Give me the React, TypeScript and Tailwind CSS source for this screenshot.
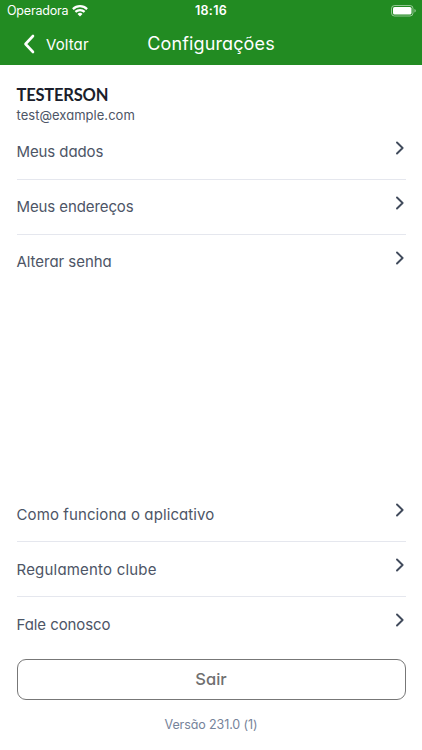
import clsx from "clsx";

type MenuItem = {
  label: string;
  tracking: string;
};

const ACCOUNT_ITEMS: MenuItem[] = [
  { label: "Meus dados", tracking: "tracking-[-0.1px]" },
  { label: "Meus endereços", tracking: "tracking-[-0.1px]" },
  { label: "Alterar senha", tracking: "tracking-[-0.04px]" },
];

const ABOUT_ITEMS: MenuItem[] = [
  { label: "Como funciona o aplicativo", tracking: "tracking-[0.1px]" },
  { label: "Regulamento clube", tracking: "tracking-[0.2px]" },
  { label: "Fale conosco", tracking: "tracking-[-0.08px]" },
];

function WifiIcon() {
  return (
    <svg className="ml-1 h-[11.5px] w-4" viewBox="0 0 16 11.5" fill="none" stroke="currentColor" strokeWidth="2.2">
      <path d="M.9 4.100a10.200 10.200 0 0 1 14.200 0" />
      <path d="M3.400 6.900a6.700 6.700 0 0 1 9.200 0" />
      <path d="M8 11.500 5.500 8.900a3.600 3.600 0 0 1 5 0z" fill="currentColor" stroke="none" />
    </svg>
  );
}

function BatteryIcon() {
  return (
    <svg className="h-3 w-[25px]" viewBox="0 0 25 12" fill="none">
      <rect x="0.5" y="0.5" width="21.5" height="10.5" rx="3" stroke="#fff" strokeOpacity="0.5" />
      <rect x="2" y="2" width="18.5" height="7.5" rx="1.6" fill="#fff" />
      <path d="M23.5 4v3.600c.8-.3 1.200-1 1.200-1.800S24.300 4.300 23.500 4z" fill="#fff" fillOpacity="0.6" />
    </svg>
  );
}

function StatusBar() {
  return (
    <div className="grid h-[22px] grid-cols-[1fr_auto_1fr] items-center px-[6px]">
      <div className="flex items-center pl-px">
        <span className="w-[61px] text-[12.5px] leading-none tracking-[-0.2px]">Operadora</span>
        <WifiIcon />
      </div>
      <span className="pt-px text-center text-[12.5px] leading-none font-semibold tracking-[0.3px]">18:16</span>
      <div className="flex justify-end">
        <BatteryIcon />
      </div>
    </div>
  );
}

function NavBar() {
  return (
    <div className="grid h-[43px] grid-cols-[1fr_auto_1fr] items-center [font-feature-settings:'cv11']">
      <button type="button" className="flex items-center pl-[23px]">
        <svg className="h-5 w-3" viewBox="0 0 12 20" fill="none" stroke="currentColor" strokeWidth="2.6">
          <path d="M10 2 2.500 10 10 18" strokeLinecap="round" strokeLinejoin="round" />
        </svg>
        <span className="ml-[11px] pt-[2px] text-[15px] leading-none tracking-[0.1px]">Voltar</span>
      </button>
      <h1 className="text-[18px] leading-none tracking-[0.14px]">Configurações</h1>
      <span />
    </div>
  );
}

function MenuList({ items, labelClass }: { items: MenuItem[]; labelClass: string }) {
  return (
    <ul>
      {items.map((item, i) => (
        <li
          key={item.label}
          className={clsx(
            "flex h-[55px] justify-between border-b",
            i < items.length - 1 ? "border-[#e5e7ee]" : "border-transparent",
          )}
        >
          <span className={clsx("text-[15px] leading-5 text-[#4d5566]", labelClass, item.tracking)}>
            {item.label}
          </span>
          <svg className="mt-[16px] mr-[2px] h-[14px] w-2" viewBox="0 0 8 14" fill="none" stroke="#414b5c" strokeWidth="1.9">
            <path d="M1 1.500 6.600 7 1 12.500" strokeLinecap="round" strokeLinejoin="round" />
          </svg>
        </li>
      ))}
    </ul>
  );
}

export default function App() {
  return (
    <div className="flex h-[750px] w-[422px] flex-col bg-white font-['Inter','Liberation_Sans',sans-serif]">
      <header className="h-[65px] shrink-0 bg-[#228b22] text-white">
        <StatusBar />
        <NavBar />
      </header>

      <main className="flex flex-1 flex-col px-[16.5px] pt-5 [font-feature-settings:'cv11']">
        <h2 className="font-['Lato',sans-serif] text-[16.5px] leading-5 font-bold tracking-[-0.2px] text-[#1b1e2b]">
          TESTERSON
        </h2>
        <p className="h-5 text-[13px] leading-[21px] tracking-[0.03px] text-[#4d5566]">test@example.com</p>

        <MenuList items={ACCOUNT_ITEMS} labelClass="pt-[17px]" />

        <div className="mt-auto">
          <MenuList items={ABOUT_ITEMS} labelClass="pt-[18px]" />
          <button
            type="button"
            className="mt-[7px] h-[41px] w-full rounded-[9px] border border-[#777777] pb-px text-[16.5px] font-medium text-[#707070]"
          >
            Sair
          </button>
          <p className="mt-[15px] mb-[15px] text-center text-[12.5px] leading-5 tracking-[-0.1px] text-[#76839a]">
            Versão 231.0 (1)
          </p>
        </div>
      </main>
    </div>
  );
}
